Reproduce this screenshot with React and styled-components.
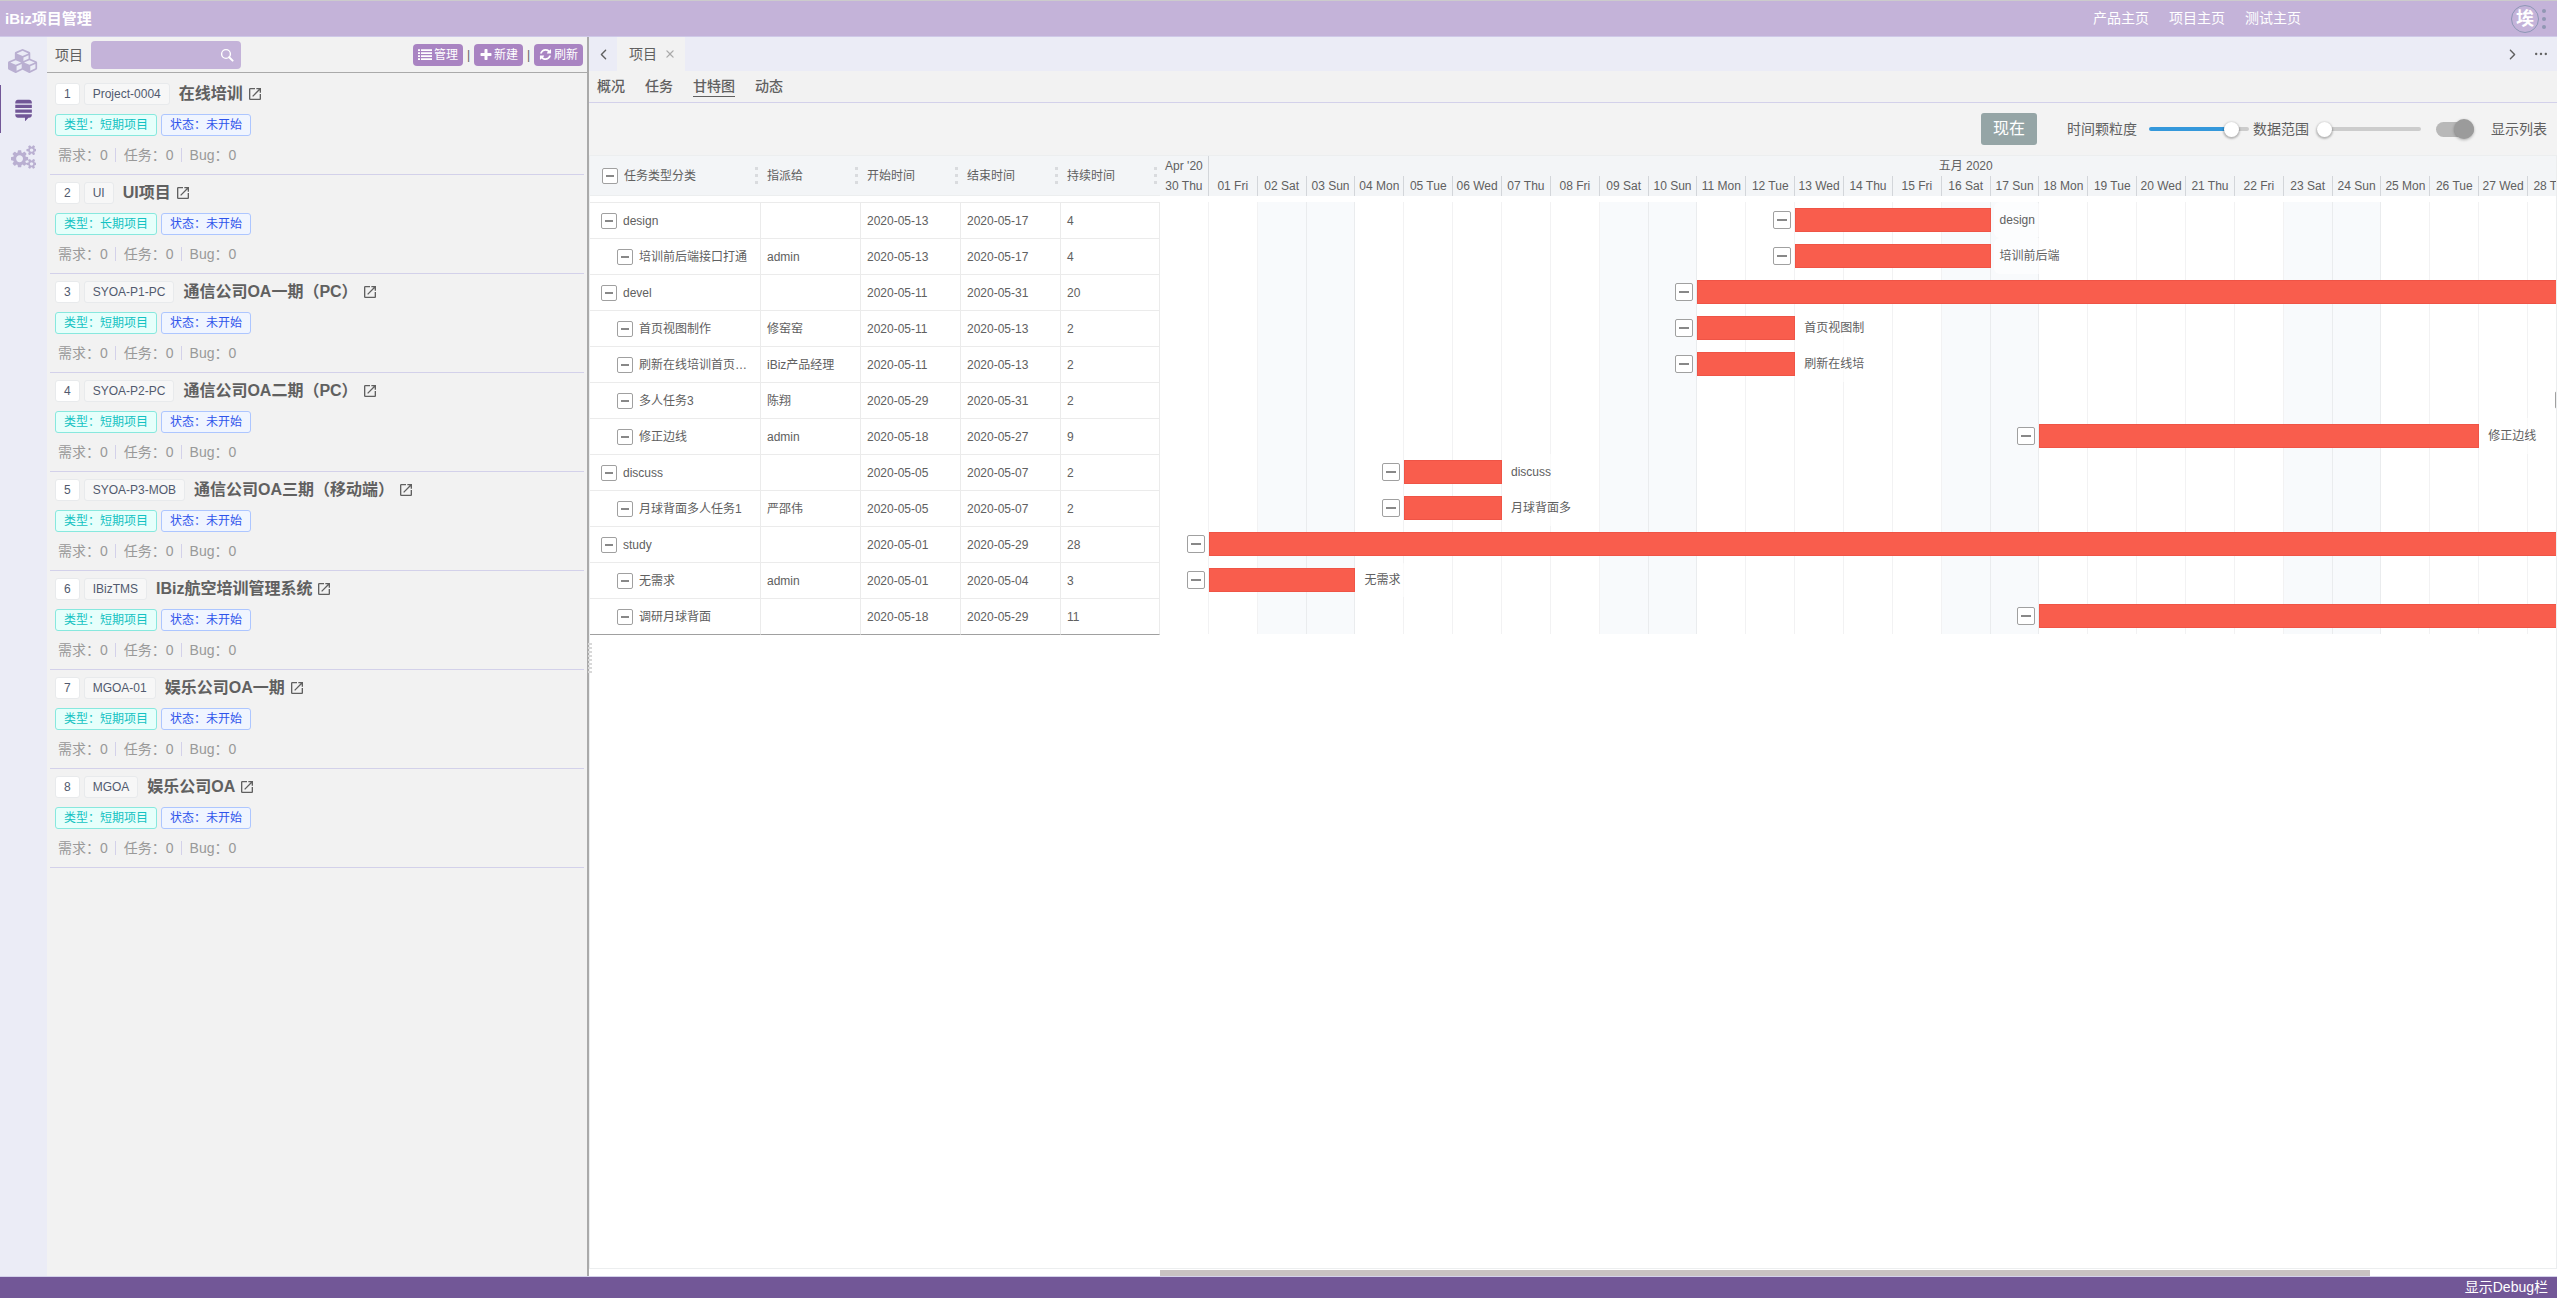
import styled, { createGlobalStyle, css } from 'styled-components';
import { MdOpenInNew } from 'react-icons/md';
import { IoIosArrowBack, IoIosArrowForward, IoIosClose, IoIosMore } from 'react-icons/io';

const GlobalStyle = createGlobalStyle`
  *,
  *::before,
  *::after {
    box-sizing: border-box;
  }

  body {
    margin: 0;
    font-family: 'Liberation Sans', 'Noto Sans CJK SC', sans-serif;
    font-size: 14px;
    line-height: 20px;
    color: #606060;
    background: #fff;
  }

  button,
  input {
    margin: 0;
    padding: 0;
    font: inherit;
    color: inherit;
  }

  a {
    color: inherit;
    text-decoration: none;
  }

  svg {
    display: block;
    flex: none;
  }
`;

const Page = styled.div`
  display: flex;
  flex-direction: column;
  height: 100vh;
  overflow: hidden;
`;

const TopBar = styled.header`
  display: flex;
  align-items: center;
  height: 37px;
  flex: none;
  padding: 0 11px 0 5px;
  color: #fff;
  background: #c4b3d9;
  border-top: 1px solid #cccbcc;
  border-bottom: 1px solid #cfc9e8;
`;

const Brand = styled.h1`
  margin: 0;
  flex: 1;
  font-size: 15px;
  font-weight: 700;
`;

const TopNav = styled.nav`
  display: flex;
  gap: 20px;
  margin-right: 210px;
  padding-bottom: 2px;
`;

const Avatar = styled.div`
  width: 28px;
  height: 28px;
  border: 1px solid #8d97b5;
  border-radius: 50%;
  font-size: 18px;
  font-weight: 700;
  line-height: 26px;
  text-align: center;
`;

const DotsButton = styled.button`
  display: flex;
  flex-direction: column;
  gap: 4px;
  margin-left: 3px;
  background: none;
  border: 0;

  i {
    width: 4px;
    height: 4px;
    border-radius: 50%;
    background: #9097b3;
  }
`;

const Body = styled.div`
  display: flex;
  flex: 1;
  min-height: 0;
`;

const Rail = styled.nav`
  flex: 0 0 47px;
  background: #ebecf6;
`;

const RailLink = styled.a`
  display: flex;
  align-items: center;
  justify-content: center;
  height: 48px;
  color: ${(p) => (p.$active ? '#725797' : '#b9afd1')};
  border-left: 1px solid ${(p) => (p.$active ? '#725797' : 'transparent')};
  border-right: 1px solid transparent;
`;

const Panel = styled.aside`
  flex: 0 0 542px;
  background: #f2f2f2;
  border-right: 2px solid #aaa;
`;

const PanelHeader = styled.div`
  display: flex;
  align-items: center;
  height: 36px;
  padding: 0 4px 0 8px;
  border-bottom: 1px solid #aaa;
`;

const SearchBox = styled.label`
  display: flex;
  align-items: center;
  width: 150px;
  height: 28px;
  margin-left: 8px;
  padding: 0 7px;
  color: #fff;
  background: #c4b3d9;
  border-radius: 4px;

  input {
    flex: 1;
    min-width: 0;
    background: none;
    border: 0;
    outline: 0;
  }
`;

const PanelActions = styled.div`
  display: flex;
  align-items: center;
  gap: 4px;
  margin-left: auto;
`;

const ActionButton = styled.button`
  display: flex;
  align-items: center;
  gap: 2px;
  height: 22px;
  padding: 0 5px;
  font-size: 12px;
  color: #fff;
  background: #a984c2;
  border: 0;
  border-radius: 4px;
`;

const Divider = styled.span`
  width: 3px;
  text-align: center;
  font-size: 12px;
`;

const ProjectList = styled.ul`
  margin: 0;
  padding: 3px 3px 0;
  list-style: none;
`;

const ProjectItem = styled.li`
  height: 99px;
  padding: 7px 5px 0;
  border-bottom: 1px solid #d3d1ea;
`;

const ItemRow = styled.div`
  display: flex;
  align-items: center;
  gap: 4px;
  margin-bottom: 9px;
`;

const tagTones = {
  white: css`
    color: #515a6e;
    background: #fff;
    border-color: #e8eaec;
  `,
  grey: css`
    color: #515a6e;
    background: #f7f7f7;
    border-color: #e8eaec;
  `,
  cyan: css`
    color: #13c2c2;
    background: #e6fffb;
    border-color: #87e8de;
  `,
  blue: css`
    color: #2f54eb;
    background: #f0f5ff;
    border-color: #adc6ff;
  `,
};

const Tag = styled.span`
  height: 22px;
  padding: 0 8px;
  font-size: 12px;
  border: 1px solid;
  border-radius: 3px;
  ${(p) => tagTones[p.$tone]}
`;

const ProjectTitle = styled.a`
  display: flex;
  align-items: center;
  gap: 4px;
  margin-left: 5px;
  font-size: 16px;
  font-weight: 700;
`;

const Counters = styled.div`
  display: flex;
  align-items: center;
  padding-left: 3px;
  color: #999;

  span + span {
    margin-left: 7px;
    padding-left: 8px;
    line-height: 14px;
    border-left: 1px solid #d3d1ea;
  }
`;

const Main = styled.main`
  display: flex;
  flex-direction: column;
  flex: 1;
  min-width: 0;
  position: relative;
`;

const SplitHandle = styled.div`
  position: absolute;
  top: 50%;
  left: -1px;
  width: 4px;
  height: 30px;
  margin-top: -14px;
  background: repeating-linear-gradient(#d8d8d8 0 2px, transparent 2px 4px);
`;

const TabBar = styled.div`
  display: flex;
  align-items: center;
  flex: none;
  height: 34px;
  padding-right: 1px;
  background: #ebecf6;
`;

const IconButton = styled.button`
  display: flex;
  align-items: center;
  justify-content: center;
  width: ${(p) => p.$width || 28}px;
  height: 34px;
  background: none;
  border: 0;
`;

const PageTab = styled.div`
  display: flex;
  align-items: center;
  height: 34px;
  padding: 0 5px 0 12px;
  margin-right: auto;
  background: #f2f2f2;
`;

const CloseButton = styled.button`
  display: flex;
  margin-left: 3px;
  color: #aaa;
  background: none;
  border: 0;
`;

const SubNav = styled.nav`
  display: flex;
  align-items: center;
  flex: none;
  gap: 20px;
  height: 32px;
  padding: 0 8px;
  background: #f2f2f2;
  border-bottom: 1px solid #d3d1ea;
`;

const SubLink = styled.a`
  font-weight: 500;
  line-height: 19px;
  border-bottom: 1px solid ${(p) => (p.$active ? '#606060' : 'transparent')};
`;

const Toolbar = styled.div`
  display: flex;
  align-items: center;
  justify-content: flex-end;
  flex: none;
  height: 52px;
  padding-right: 10px;
  background: #f3f3f3;
`;

const NowButton = styled.button`
  width: 56px;
  height: 32px;
  margin-right: 30px;
  font-size: 16px;
  color: #fff;
  background: #95a5a6;
  border: 0;
  border-radius: 3px;
`;

const Slider = styled.input`
  appearance: none;
  width: ${(p) => p.$width}px;
  height: 4px;
  margin: 0 4px 0 ${(p) => p.$lead}px;
  border-radius: 2px;
  background: linear-gradient(to right, #3498db ${(p) => p.$fill}%, #ccc ${(p) => p.$fill}%);

  &::-webkit-slider-thumb {
    appearance: none;
    width: 15px;
    height: 15px;
    border-radius: 50%;
    background: #fff;
    box-shadow: 0 1px 2px 1px rgba(0, 0, 0, 0.25);
  }
`;

const Switch = styled.input`
  appearance: none;
  display: flex;
  align-items: center;
  justify-content: flex-end;
  width: 38px;
  height: 15px;
  margin: 0 17px 0 11px;
  border-radius: 8px;
  background: #b8b8b8;

  &::before {
    content: '';
    width: 20px;
    height: 20px;
    border-radius: 50%;
    background: #9b9b9b;
    box-shadow: 0 1px 3px rgba(0, 0, 0, 0.3);
  }
`;

const GanttBox = styled.section`
  display: flex;
  flex: 1;
  min-height: 0;
  overflow: hidden;
  border: 1px solid #eceeef;
`;

const TaskTable = styled.table`
  flex: none;
  align-self: flex-start;
  width: 570px;
  table-layout: fixed;
  border-collapse: separate;
  border-spacing: 0;
  font-size: 12px;
  line-height: 18px;

  tbody::before {
    content: '';
    display: block;
    height: 6px;
  }
`;

const HeadCell = styled.th`
  height: 40px;
  padding: 0 3px 0 ${(p) => (p.$first ? 12 : 6)}px;
  font-weight: 400;
  text-align: left;
  background: #f3f5f7;
  border-bottom: 1px solid #eceeef;
`;

const HeadContent = styled.div`
  display: flex;
  align-items: center;
  gap: 6px;
`;

const ResizeGrip = styled.span`
  width: 3px;
  height: 17px;
  margin-left: auto;
  background: repeating-linear-gradient(#d9dbde 0 3px, transparent 3px 7px);
`;

const Cell = styled.td`
  height: 36px;
  padding: 0 6px;
  overflow: hidden;
  white-space: nowrap;
  border-top: 1px solid #ebebeb;
  border-right: 1px solid #ebebeb;

  tr:last-child & {
    height: 37px;
    border-bottom: 1px solid #a0a0a0;
  }
`;

const NameContent = styled.div`
  display: flex;
  align-items: center;
  gap: 6px;
  padding-left: ${(p) => (p.$level ? 21 : 5)}px;
`;

const Expander = styled.button`
  display: flex;
  align-items: center;
  justify-content: center;
  flex: none;
  width: ${(p) => p.$size}px;
  height: ${(p) => p.$size}px;
  background: #fff;
  border: 1px solid #a0a0a0;
  border-radius: 2px;

  &::before {
    content: '';
    width: ${(p) => p.$size - 8}px;
    height: 2px;
    background: #888;
  }
`;

const Chart = styled.div`
  flex: 1;
  min-width: 0;
  overflow: hidden;
  font-size: 12px;
  line-height: 20px;
`;

const Calendar = styled.div`
  height: 40px;
  overflow: hidden;
  background: #f3f5f7;
`;

const CalendarRow = styled.div`
  display: flex;
  height: 20px;
`;

/* one day takes 3.5% of the chart width */
const Month = styled.div`
  flex: 0 0 ${(p) => p.$days * 3.5}%;
  text-align: center;
  line-height: 21px;
  white-space: nowrap;
  border-right: 1px solid #d3d6da;
`;

const Day = styled.div`
  flex: 0 0 3.5%;
  text-align: center;
  line-height: 21px;
  white-space: nowrap;
  border-right: 1px solid #d3d6da;
`;

const Lanes = styled.div`
  position: relative;
  margin-top: 6px;
`;

const DayGrid = styled.div`
  position: absolute;
  inset: 0;
  display: flex;
  overflow: hidden;
`;

const DayColumn = styled.div`
  flex: 0 0 3.5%;
  background: ${(p) => (p.$weekend ? '#f8fafc' : '#fff')};
  border-right: 1px solid ${(p) => (p.$weekend ? '#eaecee' : '#f2f2f3')};
`;

const Lane = styled.div`
  position: relative;
  display: flex;
  align-items: center;
  height: 36px;
  overflow: hidden;
`;

const Bar = styled.div`
  flex: none;
  height: 24px;
  background: #f95d4d;
  border: 1px solid #ef5446;
`;

const BarLabel = styled.span`
  flex: none;
  margin-left: 3px;
  padding: 0 6px;
  line-height: 36px;
  background: rgba(255, 255, 255, 0.6);
  border-radius: 6px;
`;

const ScrollTrack = styled.div`
  flex: none;
  height: 7px;
  padding: 1px 0 0 571px;
`;

const ScrollThumb = styled.div`
  width: calc(100% - 187px);
  height: 6px;
  background: #c8c2c2;
`;

const Footer = styled.footer`
  display: flex;
  align-items: center;
  justify-content: flex-end;
  flex: none;
  height: 22px;
  padding: 0 9px 2px;
  color: #fff;
  background: #725797;
  border-top: 1px solid #d3d1ea;
`;

const FooterButton = styled.button`
  background: none;
  border: 0;
`;

const iconPaths = {
  cubes: {
    width: 2304,
    d: 'M640 1632l384-192v-314l-384 164v342zM576 1178l404-173-404-173-404 173zM1664 1632l384-192v-314l-384 164v342zM1600 1178l404-173-404-173-404 173zM1152 893l384-165v-266l-384 164v267zM1088 516l441-189-441-189-441 189zM2176 1024v416q0 36-19 67t-52 47l-448 224q-25 14-57 14t-57-14l-448-224q-4-2-7-4-2 2-7 4l-448 224q-25 14-57 14t-57-14l-448-224q-33-16-52-47t-19-67v-416q0-38 21.5-70t56.5-48l434-186v-400q0-38 21.5-70t56.5-48l448-192q23-10 50-10t50 10l448 192q35 16 56.5 48t21.5 70v400l434 186q36 16 57 48t21 70z',
  },
  stack: {
    width: 1280,
    d: 'M1259 1283v66q0 85-57.5 144.5t-138.5 59.5h-57l-260 269v-269h-529q-81 0-138.5-59.5t-57.5-144.5v-66h1238zM1259 927v255h-1238v-255h1238zM1259 570v256h-1238v-256h1238zM1259 413v67h-1238v-67q0-84 57.5-143.5t138.5-59.5h846q81 0 138.5 59.5t57.5 143.5z',
  },
  cogs: {
    width: 1920,
    d: 'M896 1024q0-106-75-181t-181-75-181 75-75 181 75 181 181 75 181-75 75-181zM1664 1408q0-52-38-90t-90-38-90 38-38 90q0 53 37.5 90.5t90.5 37.5 90.5-37.5 37.5-90.5zM1664 384q0-52-38-90t-90-38-90 38-38 90q0 53 37.5 90.5t90.5 37.5 90.5-37.5 37.5-90.5zM1280 933v185q0 10-7 19.5t-16 10.5l-155 24q-11 35-32 76 34 48 90 115 7 11 7 20 0 12-7 19-23 30-82.5 89.5t-78.5 59.5q-11 0-21-7l-115-90q-37 19-77 31-11 108-23 155-7 24-30 24h-186q-11 0-20-7.5t-10-17.5l-23-153q-34-10-75-31l-118 89q-7 7-20 7-11 0-21-8-144-133-144-160 0-9 7-19 10-14 41-53t47-61q-23-44-35-82l-152-24q-10-1-17-9.5t-7-19.5v-185q0-10 7-19.5t16-10.5l155-24q11-35 32-76-34-48-90-115-7-11-7-20 0-12 7-20 22-30 82-89t79-59q11 0 21 7l115 90q34-18 77-32 11-108 23-154 7-24 30-24h186q11 0 20 7.5t10 17.5l23 153q34 10 75 31l118-89q8-7 20-7 11 0 21 8 144 133 144 160 0 8-7 19-12 16-42 54t-45 60q23 48 34 82l152 23q10 2 17 10.5t7 19.5zM1920 1338v140q0 16-149 31-12 27-30 52 51 113 51 138 0 4-4 7-122 71-124 71-8 0-46-47t-52-68q-20 2-30 2t-30-2q-14 21-52 68t-46 47q-2 0-124-71-4-3-4-7 0-25 51-138-18-25-30-52-149-15-149-31v-140q0-16 149-31 13-29 30-52-51-113-51-138 0-4 4-7 4-2 35-20t59-34 30-16q8 0 46 46.5t52 67.5q20-2 30-2t30 2q51-71 92-112l6-2q4 0 124 70 4 3 4 7 0 25-51 138 17 23 30 52 149 15 149 31zM1920 314v140q0 16-149 31-12 27-30 52 51 113 51 138 0 4-4 7-122 71-124 71-8 0-46-47t-52-68q-20 2-30 2t-30-2q-14 21-52 68t-46 47q-2 0-124-71-4-3-4-7 0-25 51-138-18-25-30-52-149-15-149-31v-140q0-16 149-31 13-29 30-52-51-113-51-138 0-4 4-7 4-2 35-20t59-34 30-16q8 0 46 46.5t52 67.5q20-2 30-2t30 2q51-71 92-112l6-2q4 0 124 70 4 3 4 7 0 25-51 138 17 23 30 52 149 15 149 31z',
  },
  list: {
    width: 1792,
    d: 'M0 160h256v224h-256zM384 160h1408v224h-1408zM0 544h256v224h-256zM384 544h1408v224h-1408zM0 928h256v224h-256zM384 928h1408v224h-1408zM0 1312h256v224h-256zM384 1312h1408v224h-1408z',
  },
  plus: {
    width: 1664,
    d: 'M1600 736v192q0 40-28 68t-68 28h-416v416q0 40-28 68t-68 28h-192q-40 0-68-28t-28-68v-416h-416q-40 0-68-28t-28-68v-192q0-40 28-68t68-28h416v-416q0-40 28-68t68-28h192q40 0 68 28t28 68v416h416q40 0 68 28t28 68z',
  },
  refresh: {
    width: 1792,
    d: 'M1639 1056q0 5-1 7-64 268-268 434.5t-478 166.5q-146 0-282.5-55t-243.5-157l-129 129q-19 19-45 19t-45-19-19-45v-448q0-26 19-45t45-19h448q26 0 45 19t19 45-19 45l-137 137q71 66 161 102t187 36q134 0 250-65t186-179q11-17 53-117 8-23 30-23h192q13 0 22.5 9.5t9.5 22.5zM1664 256v448q0 26-19 45t-45 19h-448q-26 0-45-19t-19-45 19-45l138-138q-148-137-349-137-134 0-250 65t-186 179q-11 17-53 117-8 23-30 23h-199q-13 0-22.5-9.5t-9.5-22.5v-7q65-268 270-434.5t480-166.5q146 0 284 55.5t245 156.5l130-129q19-19 45-19t45 19 19 45z',
  },
};

function Icon({ name, size }) {
  const { width, d } = iconPaths[name];
  return (
    <svg height={size} width={(width / 1792) * size} viewBox={`0 0 ${width} 1792`} fill="currentColor">
      <path d={d} />
    </svg>
  );
}

function SearchIcon() {
  return (
    <svg width="14" height="14" viewBox="0 0 14 14" fill="none" stroke="currentColor">
      <circle cx="6" cy="6" r="4.4" strokeWidth="1.4" />
      <path d="M9.2 9.2l3.4 3.4" strokeWidth="2" strokeLinecap="round" />
    </svg>
  );
}

const projects = [
  { code: 'Project-0004', name: '在线培训', type: '短期项目' },
  { code: 'UI', name: 'UI项目', type: '长期项目' },
  { code: 'SYOA-P1-PC', name: '通信公司OA一期（PC）', type: '短期项目' },
  { code: 'SYOA-P2-PC', name: '通信公司OA二期（PC）', type: '短期项目' },
  { code: 'SYOA-P3-MOB', name: '通信公司OA三期（移动端）', type: '短期项目' },
  { code: 'IBizTMS', name: 'IBiz航空培训管理系统', type: '短期项目' },
  { code: 'MGOA-01', name: '娱乐公司OA一期', type: '短期项目' },
  { code: 'MGOA', name: '娱乐公司OA', type: '短期项目' },
];

// start and end are days of May 2020, the chart opens on April 30
const tasks = [
  { name: 'design', start: 13, end: 17, label: 'design' },
  { name: '培训前后端接口打通', user: 'admin', start: 13, end: 17, level: 1, label: '培训前后端' },
  { name: 'devel', start: 11, end: 31 },
  { name: '首页视图制作', user: '修窑窑', start: 11, end: 13, level: 1, label: '首页视图制' },
  { name: '刷新在线培训首页…', user: 'iBiz产品经理', start: 11, end: 13, level: 1, label: '刷新在线培' },
  { name: '多人任务3', user: '陈翔', start: 29, end: 31, level: 1 },
  { name: '修正边线', user: 'admin', start: 18, end: 27, level: 1, label: '修正边线' },
  { name: 'discuss', start: 5, end: 7, label: 'discuss' },
  { name: '月球背面多人任务1', user: '严邵伟', start: 5, end: 7, level: 1, label: '月球背面多' },
  { name: 'study', start: 1, end: 29 },
  { name: '无需求', user: 'admin', start: 1, end: 4, level: 1, label: '无需求' },
  { name: '调研月球背面', start: 18, end: 29, level: 1 },
];

const columns = ['任务类型分类', '指派给', '开始时间', '结束时间', '持续时间'];
const columnWidths = [171, 100, 100, 100, 99];

const weekdays = ['Thu', 'Fri', 'Sat', 'Sun', 'Mon', 'Tue', 'Wed'];
const days = Array.from({ length: 29 }, (_, i) => {
  const weekday = weekdays[i % 7];
  return {
    text: `${String(i || 30).padStart(2, '0')} ${weekday}`,
    weekend: weekday === 'Sat' || weekday === 'Sun',
  };
});

const toDate = (day) => `2020-05-${String(day).padStart(2, '0')}`;

function ProjectPanel() {
  return (
    <Panel>
      <PanelHeader>
        <span>项目</span>
        <SearchBox>
          <input type="text" aria-label="搜索" />
          <SearchIcon />
        </SearchBox>
        <PanelActions>
          <ActionButton>
            <Icon name="list" size={14} />
            管理
          </ActionButton>
          <Divider>|</Divider>
          <ActionButton>
            <Icon name="plus" size={14} />
            新建
          </ActionButton>
          <Divider>|</Divider>
          <ActionButton>
            <Icon name="refresh" size={13} />
            刷新
          </ActionButton>
        </PanelActions>
      </PanelHeader>
      <ProjectList>
        {projects.map((project, i) => (
          <ProjectItem key={project.code}>
            <ItemRow>
              <Tag $tone="white">{i + 1}</Tag>
              <Tag $tone="grey">{project.code}</Tag>
              <ProjectTitle href="#">
                {project.name}
                <MdOpenInNew size={16} />
              </ProjectTitle>
            </ItemRow>
            <ItemRow>
              <Tag $tone="cyan">类型：{project.type}</Tag>
              <Tag $tone="blue">状态：未开始</Tag>
            </ItemRow>
            <Counters>
              <span>需求：0</span>
              <span>任务：0</span>
              <span>Bug：0</span>
            </Counters>
          </ProjectItem>
        ))}
      </ProjectList>
    </Panel>
  );
}

function Tasks() {
  return (
    <TaskTable>
      <colgroup>
        {columnWidths.map((width, i) => (
          <col key={i} width={width} />
        ))}
      </colgroup>
      <thead>
        <tr>
          {columns.map((column, i) => (
            <HeadCell key={column} $first={i === 0}>
              <HeadContent>
                {i === 0 && <Expander $size={16} aria-label="全部收起" />}
                {column}
                <ResizeGrip />
              </HeadContent>
            </HeadCell>
          ))}
        </tr>
      </thead>
      <tbody>
        {tasks.map((task) => (
          <tr key={task.name}>
            <Cell>
              <NameContent $level={task.level}>
                <Expander $size={16} aria-label="收起" />
                {task.name}
              </NameContent>
            </Cell>
            <Cell>{task.user}</Cell>
            <Cell>{toDate(task.start)}</Cell>
            <Cell>{toDate(task.end)}</Cell>
            <Cell>{task.end - task.start}</Cell>
          </tr>
        ))}
      </tbody>
    </TaskTable>
  );
}

function GanttChart() {
  return (
    <Chart>
      <Calendar>
        <CalendarRow>
          <Month $days={1}>Apr '20</Month>
          <Month $days={31}>五月 2020</Month>
        </CalendarRow>
        <CalendarRow>
          {days.map((day) => (
            <Day key={day.text}>{day.text}</Day>
          ))}
        </CalendarRow>
      </Calendar>
      <Lanes>
        <DayGrid>
          {days.map((day) => (
            <DayColumn key={day.text} $weekend={day.weekend} />
          ))}
        </DayGrid>
        {tasks.map((task) => (
          <Lane key={task.name}>
            <Expander
              $size={18}
              aria-label="收起"
              style={{ marginLeft: `calc(${task.start * 3.5}% - 22px)`, marginRight: 4 }}
            />
            <Bar style={{ width: `${(task.end - task.start) * 3.5}%` }} />
            {task.label && <BarLabel>{task.label}</BarLabel>}
          </Lane>
        ))}
      </Lanes>
    </Chart>
  );
}

function App() {
  return (
    <Page>
      <GlobalStyle />
      <TopBar>
        <Brand>iBiz项目管理</Brand>
        <TopNav>
          <a href="#">产品主页</a>
          <a href="#">项目主页</a>
          <a href="#">测试主页</a>
        </TopNav>
        <Avatar>埃</Avatar>
        <DotsButton aria-label="更多">
          <i />
          <i />
          <i />
        </DotsButton>
      </TopBar>
      <Body>
        <Rail>
          <RailLink href="#" aria-label="产品">
            <Icon name="cubes" size={24} />
          </RailLink>
          <RailLink href="#" aria-label="项目" $active>
            <Icon name="stack" size={24} />
          </RailLink>
          <RailLink href="#" aria-label="设置">
            <Icon name="cogs" size={24} />
          </RailLink>
        </Rail>
        <ProjectPanel />
        <Main>
          <TabBar>
            <IconButton aria-label="向左">
              <IoIosArrowBack size={15} />
            </IconButton>
            <PageTab>
              项目
              <CloseButton aria-label="关闭">
                <IoIosClose size={20} />
              </CloseButton>
            </PageTab>
            <IconButton aria-label="向右">
              <IoIosArrowForward size={15} />
            </IconButton>
            <IconButton aria-label="更多" $width={30}>
              <IoIosMore size={16} />
            </IconButton>
          </TabBar>
          <SubNav>
            <SubLink href="#">概况</SubLink>
            <SubLink href="#">任务</SubLink>
            <SubLink href="#" $active>
              甘特图
            </SubLink>
            <SubLink href="#">动态</SubLink>
          </SubNav>
          <Toolbar>
            <NowButton>现在</NowButton>
            <label htmlFor="scale">时间颗粒度</label>
            <Slider id="scale" type="range" defaultValue={88} $width={100} $lead={12} $fill={82} />
            <label htmlFor="scope">数据范围</label>
            <Slider id="scope" type="range" defaultValue={0} $width={104} $lead={8} $fill={0} />
            <Switch id="show-list" type="checkbox" defaultChecked />
            <label htmlFor="show-list">显示列表</label>
          </Toolbar>
          <GanttBox>
            <Tasks />
            <GanttChart />
          </GanttBox>
          <ScrollTrack>
            <ScrollThumb />
          </ScrollTrack>
          <SplitHandle />
        </Main>
      </Body>
      <Footer>
        <FooterButton>显示Debug栏</FooterButton>
      </Footer>
    </Page>
  );
}

export default App;
